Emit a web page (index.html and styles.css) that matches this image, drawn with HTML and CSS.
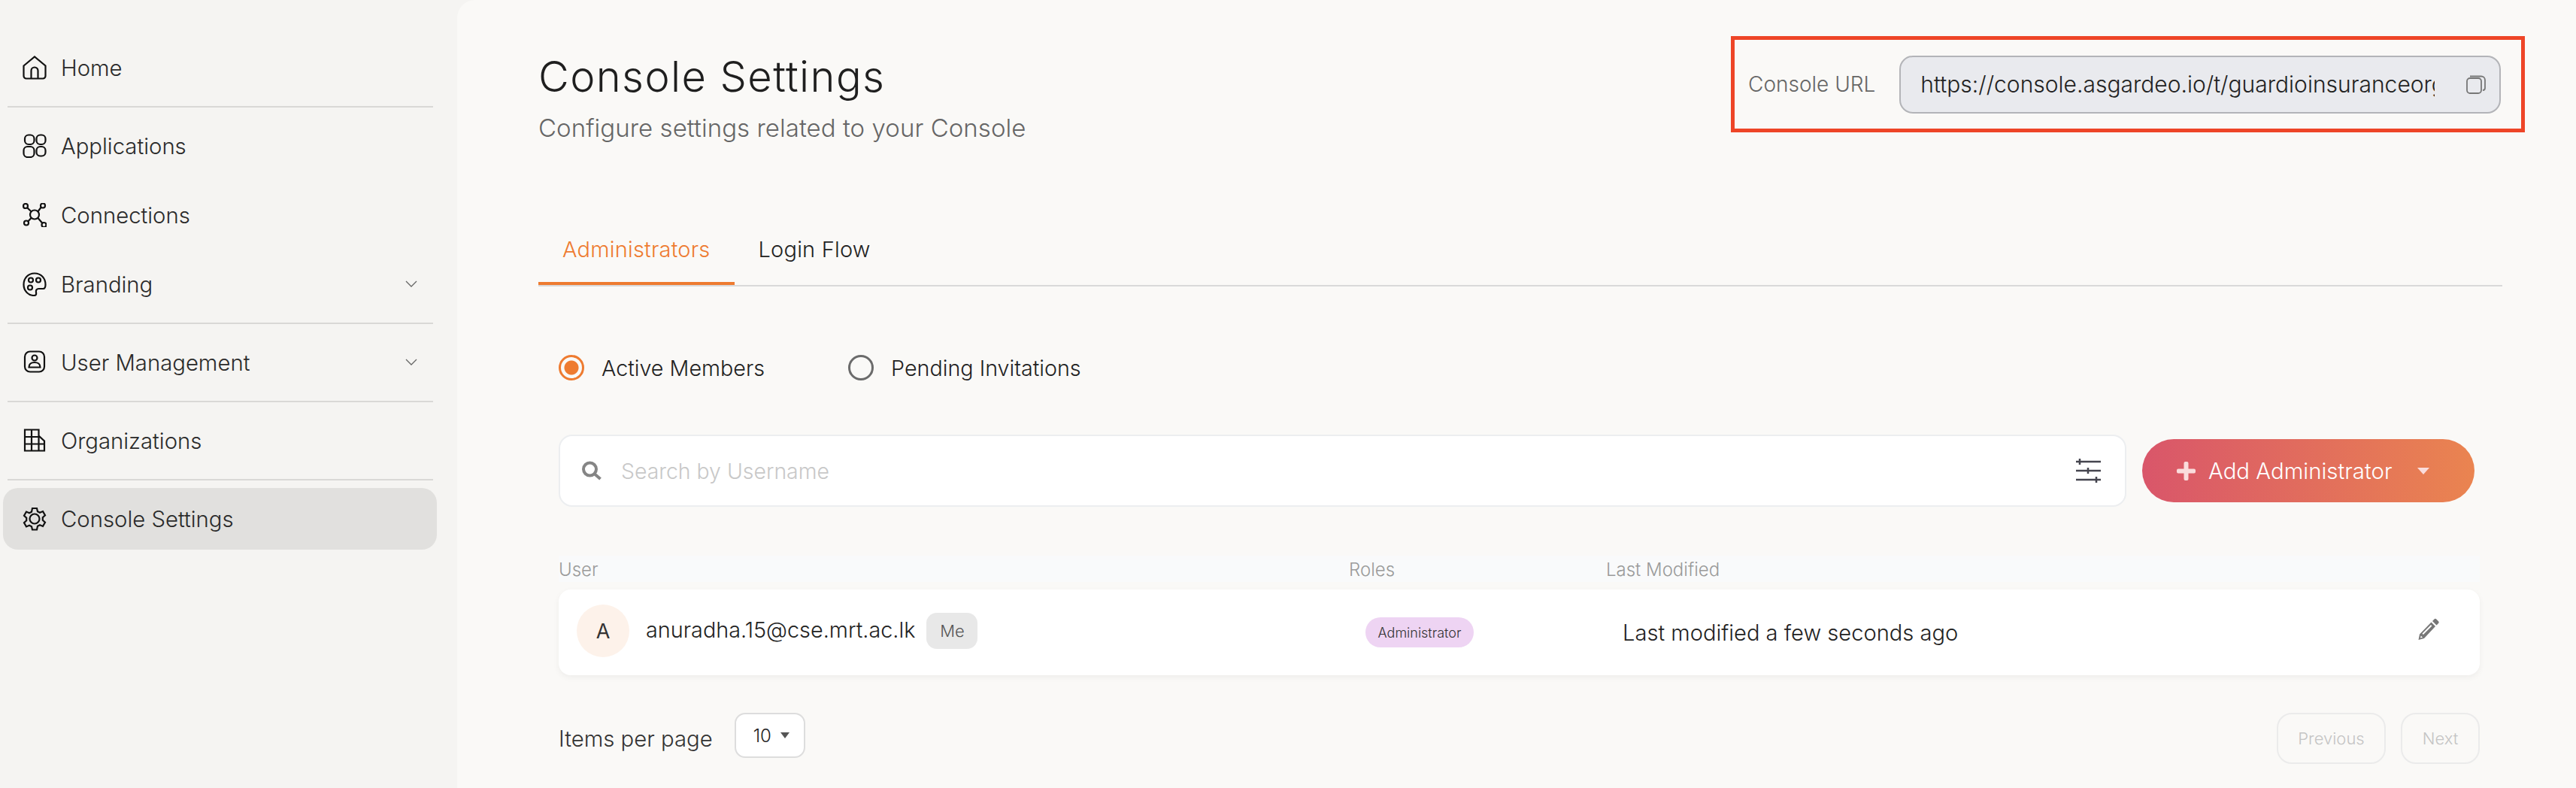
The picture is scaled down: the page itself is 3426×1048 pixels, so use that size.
FILE: index.html
```html
<!DOCTYPE html>
<html lang="en">
<head>
    <meta charset="UTF-8">
    <title>Console Settings</title>
    <link rel="stylesheet" href="styles.css">
</head>
<body>
    <aside class="sidebar">
        <a class="nav-item">
            <svg class="nav-icon" viewBox="0 0 32 32"><path d="M1.500 13.500 16 1.500l14.500 12V27a3.500 3.500 0 0 1-3.500 3.500H5A3.500 3.500 0 0 1 1.500 27zM11.500 30.500V20a4.500 4.500 0 0 1 9 0v10.500"/></svg>
            <span>Home</span>
        </a>
        <hr class="nav-divider">
        <a class="nav-item">
            <svg class="nav-icon" viewBox="0 0 32 32"><rect x="3" y="1.500" width="12.500" height="12.500" rx="5"/><rect x="18.500" y="1.500" width="12" height="12.500" rx="5"/><rect x="1.500" y="17" width="14" height="14" rx="5"/><rect x="18.500" y="17" width="12" height="12.500" rx="5"/></svg>
            <span>Applications</span>
        </a>
        <a class="nav-item">
            <svg class="nav-icon" viewBox="0 0 32 32"><circle cx="16" cy="15.500" r="6"/><circle cx="4" cy="4" r="3"/><circle cx="27" cy="3.500" r="3"/><circle cx="5" cy="26.500" r="3"/><circle cx="28.500" cy="29" r="3"/><path d="m6.200 6.200 5.500 5.300M24.800 5.500l-4.500 6M7.200 24.500l4.500-4.800M26.300 26.800l-6-7"/></svg>
            <span>Connections</span>
        </a>
        <a class="nav-item">
            <svg class="nav-icon" viewBox="0 0 32 32"><path d="M16 1.500C7.500 1.500 1.500 8 1.500 16.500S8 31 15 31c3.500 0 3.300-2 3-4-.4-3 .5-5 3.500-5h6c2.500 0 3-2 3-5.500C30.500 8 24.500 1.500 16 1.500z"/><circle cx="11" cy="10.500" r="3"/><circle cx="21" cy="10.500" r="3"/><circle cx="10" cy="20.500" r="3"/></svg>
            <span>Branding</span>
            <svg class="nav-chevron" viewBox="0 0 16 10"><path d="m1 1 7 7 7-7"/></svg>
        </a>
        <hr class="nav-divider">
        <a class="nav-item">
            <svg class="nav-icon" viewBox="0 0 32 32"><rect x="3" y="1.500" width="26" height="27" rx="7"/><circle cx="16" cy="10" r="3.500"/><path d="M8.500 22.500c0-4.500 3.200-6.500 7.500-6.500s7.500 2 7.500 6.500z"/></svg>
            <span>User Management</span>
            <svg class="nav-chevron" viewBox="0 0 16 10"><path d="m1 1 7 7 7-7"/></svg>
        </a>
        <hr class="nav-divider">
        <a class="nav-item">
            <svg class="nav-icon" viewBox="0 0 32 32"><path d="M3 1.500h18.500v8l7.500 7v13H3zM3 11h18.500M3 20.500h26M12 1.500v29M21.500 9.500v21"/></svg>
            <span>Organizations</span>
        </a>
        <hr class="nav-divider">
        <a class="nav-item active">
            <svg class="nav-icon" viewBox="0 0 32 32"><circle cx="16" cy="16" r="6.500"/><path d="M13 2h6l1 4.200 3 1.500 4-1.600 3 5.200-3.200 2.900v3.600l3.200 2.900-3 5.200-4-1.600-3 1.500L19 30.500h-6l-1-4.200-3-1.500-4 1.600-3-5.200 3.200-2.900v-3.600L2 11.800l3-5.200 4 1.600 3-1.500z"/></svg>
            <span>Console Settings</span>
        </a>
    </aside>

    <main class="content">
        <header class="page-head">
            <div class="titles">
                <h1>Console Settings</h1>
                <p class="subtitle">Configure settings related to your Console</p>
            </div>
            <div class="console-url">
                <label>Console URL</label>
                <div class="url-field">
                    <span class="url-text">https://console.asgardeo.io/t/guardioinsuranceorg</span>
                    <svg class="copy-icon" viewBox="0 0 26 25"><rect x="1" y="4" width="19" height="20" rx="4"/><path d="M5 1.500h15a5 5 0 0 1 5 5V17a3 3 0 0 1-3 3"/></svg>
                </div>
            </div>
        </header>

        <nav class="tabs">
            <a class="tab active">Administrators</a>
            <a class="tab">Login Flow</a>
        </nav>

        <div class="panel">
            <div class="radios">
                <label class="radio checked"><i></i>Active Members</label>
                <label class="radio"><i></i>Pending Invitations</label>
            </div>

            <div class="toolbar">
                <div class="search">
                    <svg class="search-icon" viewBox="0 0 28 26"><circle cx="11.500" cy="11" r="8.500"/><path d="m18 17.500 7.500 6.500"/></svg>
                    <span class="placeholder">Search by Username</span>
                    <svg class="filter-icon" viewBox="0 0 34 34"><path d="M1 5h33M1 17h33M1 29h33M6 1v8M17 13v8M28 25v8"/></svg>
                </div>
                <button class="add-btn">
                    <svg class="plus" viewBox="0 0 25 25"><path d="M9.500 2a2 2 0 0 1 2-2h2a2 2 0 0 1 2 2v7.500H23a2 2 0 0 1 2 2v2a2 2 0 0 1-2 2h-7.500V23a2 2 0 0 1-2 2h-2a2 2 0 0 1-2-2v-7.500H2a2 2 0 0 1-2-2v-2a2 2 0 0 1 2-2h7.500z"/></svg>
                    <span>Add Administrator</span>
                    <i class="caret"></i>
                </button>
            </div>

            <div class="table-head">
                <span class="col-user">User</span>
                <span class="col-roles">Roles</span>
                <span class="col-mod">Last Modified</span>
            </div>
            <div class="table-row">
                <div class="col-user user-cell">
                    <div class="avatar">A</div>
                    <span class="email">anuradha.15@cse.mrt.ac.lk</span>
                    <span class="me-chip">Me</span>
                </div>
                <div class="col-roles"><span class="role-chip">Administrator</span></div>
                <div class="col-mod modified">Last modified a few seconds ago</div>
                <svg class="pencil" viewBox="0 0 28 29"><path fill-rule="evenodd" d="M21.500 1.500a2 2 0 0 1 2.800 0l2.700 2.700a2 2 0 0 1 0 2.800l-2.500 2.600-5.500-5.500zM17.500 5.600l5.500 5.500L8 27 .5 29 2 21.500zM5.500 20.500l1.400 1.400L18.400 10.400 17 9zM3.800 23.500l-.8 3 3-.7z"/></svg>
            </div>

            <div class="pagination">
                <span class="per-page">Items per page</span>
                <div class="page-select">10<i class="caret small"></i></div>
                <div class="pager">
                    <button class="page-btn prev">Previous</button>
                    <button class="page-btn next">Next</button>
                </div>
            </div>
        </div>
    </main>
</body>
</html>
```

FILE: styles.css
```css
* {
    margin: 0;
    padding: 0;
    box-sizing: border-box;
}

body {
    width: 3426px;
    height: 1048px;
    display: flex;
    overflow: hidden;
    background: #f5f4f2;
    font-family: Inter, "Liberation Sans", sans-serif;
    font-weight: 300;
    color: #1f1f1f;
}

/* Left navigation */
.sidebar {
    width: 608px;
    flex: none;
    padding: 49px 27px 0 4px;
}

.nav-item {
    height: 82px;
    display: flex;
    align-items: center;
    gap: 19px;
    padding: 0 26px;
    border-radius: 20px;
    font-size: 29.300px;
    color: #2a2a2a;
}

.nav-item + .nav-item {
    margin-top: 10px;
}

.nav-item.active {
    background: #e1e0de;
}

.nav-icon {
    width: 32px;
    height: 32px;
    flex: none;
    fill: none;
    stroke: #111;
    stroke-width: 2.200;
}

.nav-chevron {
    width: 16px;
    height: 10px;
    margin-left: auto;
    fill: none;
    stroke: #666;
    stroke-width: 1.300;
}

.nav-divider {
    border: 0;
    height: 2px;
    margin: 10px 5px 10px 6px;
    background: #d9d8d6;
}

/* Main area */
.content {
    flex: 1;
    background: #faf9f7;
    border-top-left-radius: 24px;
    padding: 48px 68px 0 108px;
}

.page-head {
    display: flex;
    align-items: flex-start;
    justify-content: space-between;
}

.titles {
    padding-top: 22px;
}

h1 {
    font-size: 56px;
    font-weight: 300;
    line-height: 64px;
    letter-spacing: 1.400px;
    color: #1f1f1f;
}

.subtitle {
    font-size: 33px;
    line-height: 46px;
    margin-top: 13px;
    letter-spacing: 0.050px;
    color: #666;
}

.console-url {
    width: 1056px;
    height: 128px;
    display: flex;
    align-items: center;
    gap: 32px;
    padding: 0 27px 0 18px;
    border: 5px solid #ee4527;
    color: #666;
    font-size: 28px;
}

.url-field {
    flex: 1;
    height: 77px;
    display: flex;
    align-items: center;
    justify-content: space-between;
    padding: 0 18px 0 26px;
    background: #e9eaee;
    border: 2px solid #b3b4b8;
    border-radius: 18px;
}

.url-text {
    width: 684px;
    overflow: hidden;
    white-space: nowrap;
    font-size: 30px;
    color: #222;
}

.copy-icon {
    width: 26px;
    height: 25px;
    fill: none;
    stroke: #777;
    stroke-width: 1.800;
}

.tabs {
    display: flex;
    margin: 122px 30px 0 0;
    height: 66px;
    border-bottom: 2px solid #d9d9d9;
}

.tab {
    height: 64px;
    padding: 0 32px;
    font-size: 29px;
    line-height: 34px;
    letter-spacing: 0.200px;
    color: #222;
}

.tab.active {
    color: #ee7b30;
    border-bottom: 4px solid #ee7b30;
}

.panel {
    padding: 0 0 0 27px;
}

.radios {
    display: flex;
    gap: 111px;
    margin-top: 90px;
    height: 36px;
}

.radio {
    display: flex;
    align-items: center;
    gap: 23px;
    font-size: 28.700px;
    color: #222;
}

.radio i {
    width: 34px;
    height: 34px;
    border-radius: 50%;
    border: 3.500px solid #6b6b6b;
    background: transparent;
}

.radio.checked i {
    border-color: #ee7b30;
    background: radial-gradient(circle, #ee7b30 0 9px, transparent 10px);
}

.toolbar {
    display: flex;
    align-items: center;
    margin-top: 71px;
    gap: 21px;
}

.search {
    width: 2085px;
    height: 96px;
    display: flex;
    align-items: center;
    padding: 0 32px 0 28px;
    background: #fff;
    border: 2px solid #eceef0;
    border-radius: 18px;
}

.search-icon {
    width: 28px;
    height: 26px;
    fill: none;
    stroke: #858585;
    stroke-width: 4;
}

.placeholder {
    flex: 1;
    margin-left: 25px;
    font-size: 28.400px;
    color: #c8c8c8;
}

.filter-icon {
    width: 34px;
    height: 34px;
    fill: none;
    stroke: #45454f;
    stroke-width: 2.500;
}

.add-btn {
    width: 442px;
    height: 84px;
    display: flex;
    align-items: center;
    padding: 0 0 0 46px;
    border: 0;
    border-radius: 42px;
    background: linear-gradient(90deg, #d9566a, #ea8450);
    color: #fff;
    font: inherit;
    font-size: 29.400px;
}

.plus {
    width: 25px;
    height: 25px;
    fill: #fadcdc;
    margin-right: 17px;
}

.caret {
    width: 0;
    height: 0;
    margin-left: 34px;
    border-left: 8.500px solid transparent;
    border-right: 8.500px solid transparent;
    border-top: 9px solid #fadcdc;
}

/* Table */
.table-head {
    display: flex;
    align-items: center;
    width: 2555px;
    height: 35px;
    margin-top: 65px;
    padding-top: 2px;
    background: #f9fafb;
    font-size: 24px;
    color: #9a9a9a;
}

.col-user {
    width: 1051px;
    flex: none;
}

.col-roles {
    width: 342px;
    flex: none;
}

.table-row {
    width: 2555px;
    height: 114px;
    margin-top: 10px;
    display: flex;
    align-items: center;
    background: #fff;
    border-radius: 16px;
    box-shadow: 0 3px 8px rgba(0, 0, 0, 0.05);
}

.user-cell {
    display: flex;
    align-items: center;
    padding: 0 0 4px 24px;
}

.avatar {
    width: 70px;
    height: 70px;
    flex: none;
    display: flex;
    align-items: center;
    justify-content: center;
    border-radius: 50%;
    background: #fdf2ea;
    font-size: 27px;
    font-weight: 400;
    color: #333;
}

.email {
    margin-left: 22px;
    margin-bottom: 4px;
    font-size: 28.800px;
    color: #222;
}

.me-chip {
    width: 68px;
    height: 48px;
    margin-left: 15px;
    display: flex;
    align-items: center;
    justify-content: center;
    background: #e8e8e8;
    border-radius: 14px;
    font-size: 22px;
    color: #555;
}

.role-chip {
    display: inline-flex;
    align-items: center;
    justify-content: center;
    width: 144px;
    height: 40px;
    margin-left: 22px;
    border-radius: 20px;
    background: #eed4f3;
    font-size: 18px;
    color: #333;
}

.col-mod {
    flex: none;
}

.modified {
    margin-left: 22px;
    font-size: 29.100px;
    color: #222;
}

.pencil {
    width: 28px;
    height: 29px;
    margin-left: auto;
    margin-right: 54px;
    margin-bottom: 10px;
    fill: #777;
}

.pagination {
    display: flex;
    align-items: center;
    width: 2555px;
    margin-top: 50px;
    height: 68px;
}

.per-page {
    font-size: 29.300px;
    color: #333;
}

.page-select {
    width: 94px;
    height: 60px;
    margin-left: 29px;
    margin-bottom: 8px;
    display: flex;
    align-items: center;
    padding-left: 23px;
    background: #fff;
    border: 2px solid #ddd;
    border-radius: 14px;
    font-size: 24px;
    color: #222;
}

.caret.small {
    margin-left: 12px;
    border-left-width: 6px;
    border-right-width: 6px;
    border-top: 8px solid #555;
}

.pager {
    display: flex;
    gap: 20px;
    margin-left: auto;
}

.page-btn {
    height: 68px;
    background: transparent;
    border: 2px solid #ebebeb;
    border-radius: 20px;
    font: inherit;
    font-size: 22px;
    color: #c4c4c4;
}

.page-btn.prev {
    width: 145px;
}

.page-btn.next {
    width: 105px;
}
```
